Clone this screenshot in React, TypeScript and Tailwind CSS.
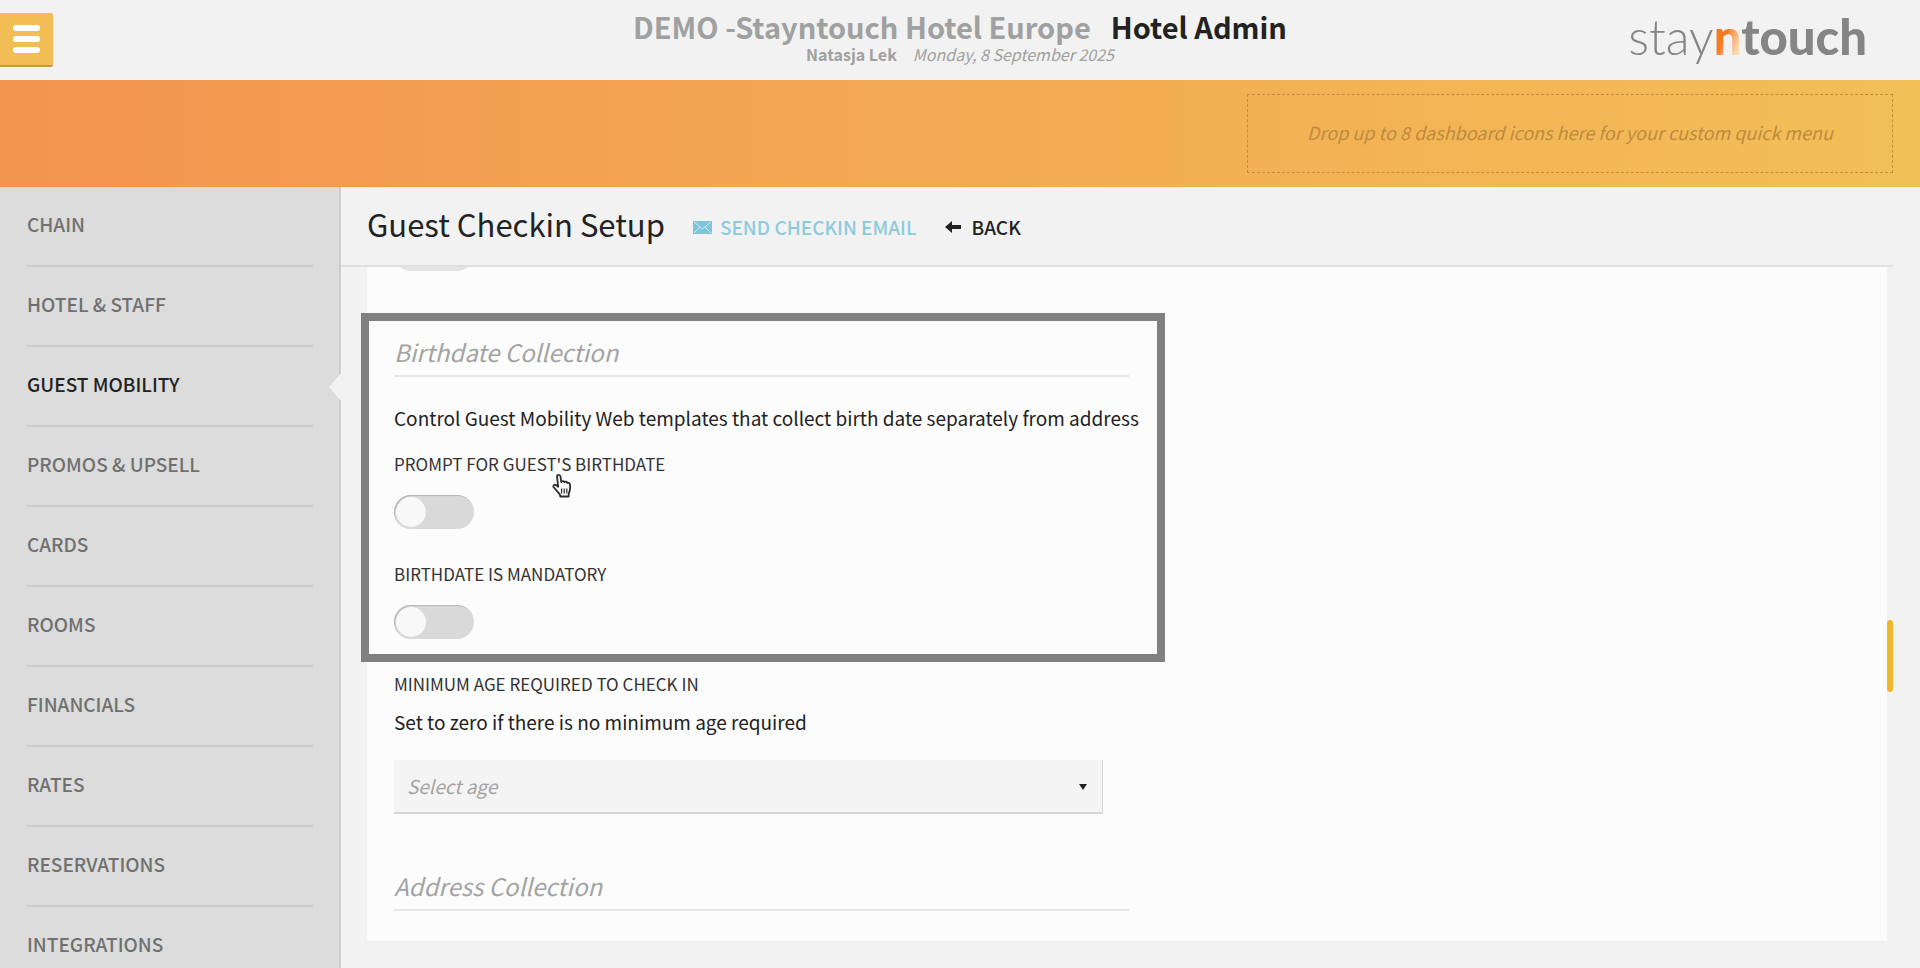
import { useState } from 'react';

const menuItems = [
  'Chain',
  'Hotel & Staff',
  'Guest Mobility',
  'Promos & Upsell',
  'Cards',
  'Rooms',
  'Financials',
  'Rates',
  'Reservations',
  'Integrations',
];

interface ToggleProps {
  id: string;
  label: string;
  checked: boolean;
  onChange: (value: boolean) => void;
}

function Toggle({ id, label, checked, onChange }: ToggleProps) {
  return (
    <div className="flex flex-col items-start gap-[19px]">
      <label htmlFor={id} className="text-[17px] leading-6 uppercase text-[#333333]">
        {label}
      </label>
      <input
        id={id}
        type="checkbox"
        role="switch"
        checked={checked}
        onChange={(e) => onChange(e.target.checked)}
        className="h-[34px] w-20 cursor-pointer appearance-none rounded-full bg-[#d9d9d9] p-0.5 shadow-[inset_1px_1px_1px_#b5b5b5] before:block before:size-[30px] before:rounded-full before:bg-[#f8f8f8] checked:bg-[#f2bd55] checked:before:ml-auto"
      />
    </div>
  );
}

function SectionTitle({ children }: { children: string }) {
  return (
    <h2 className="border-b-2 border-[#e6e6e6] pb-[7px] text-2xl leading-[33px] italic text-[#a3a3a3]">
      {children}
    </h2>
  );
}

function HandCursor() {
  return (
    <svg viewBox="0 0 20 26" className="pointer-events-none absolute top-[138px] left-[158px] h-[26px] w-5" aria-hidden="true">
      <path
        d="M5 3.5C5 1.2 8.2 1.2 8.5 3.5L9.3 9C10 7.6 12 7.9 12.4 9.2C13.2 8.2 15 8.7 15.3 10C16.4 9.4 17.9 10.2 18 11.8C18.4 15.3 18.3 17.4 16.8 20.4L16.6 23.5H8.2L8 21.5C6 19.2 3.6 16.5 1.8 14.3C.6 12.5 2.6 10.9 4.2 12.2L6.2 13.8Z"
        fill="#ffffff"
        stroke="#2b2b2b"
        strokeWidth="1.8"
        strokeLinejoin="round"
      />
      <path d="M9.6 15.5V20.5M12.2 15.5V20.5M14.8 15.5V20.5" stroke="#2b2b2b" strokeWidth="1.2" />
    </svg>
  );
}

export default function App() {
  const [active, setActive] = useState('Guest Mobility');
  const [promptBirthdate, setPromptBirthdate] = useState(false);
  const [mandatory, setMandatory] = useState(false);
  const [age, setAge] = useState('');

  return (
    <div className="flex h-screen flex-col overflow-hidden bg-[#f2f2f2] font-['Noto_Sans_CJK_SC',sans-serif] text-[#222222]">
      {/* Header */}
      <header className="grid h-20 shrink-0 grid-cols-[1fr_auto_1fr] items-start">
        <button
          aria-label="Open menu"
          className="mt-[13px] flex h-[54px] w-[53px] flex-col items-center justify-center gap-[5px] rounded-r-xs border-b-2 border-[#c39a48] bg-[#f2bd55]"
        >
          <span className="h-1.5 w-[27px] rounded-full bg-white" />
          <span className="h-1.5 w-[27px] rounded-full bg-white" />
          <span className="h-1.5 w-[27px] rounded-full bg-white" />
        </button>
        <div className="flex flex-col items-center pt-2.5">
          <h1 className="flex gap-5 text-[29px] leading-8 font-bold">
            <span className="text-[#a0a0a0]">DEMO -Stayntouch Hotel Europe</span>
            <span>Hotel Admin</span>
          </h1>
          <p className="flex gap-4 pt-0.5 text-base leading-5 text-[#a0a0a0]">
            <strong>Natasja Lek</strong>
            <em>Monday, 8 September 2025</em>
          </p>
        </div>
        <div className="justify-self-end pt-1.5 pr-[53px] font-['Lato',sans-serif] text-[49px] leading-[60px] text-[#858585]">
          <span className="font-light">stay</span>
          <span className="bg-linear-to-br from-[#f47b20] from-45% to-[#fbd9b0] to-80% bg-clip-text font-black text-transparent">n</span>
          <span className="font-black">touch</span>
        </div>
      </header>

      {/* Quick menu */}
      <div className="flex h-[107px] shrink-0 justify-end bg-linear-to-r from-[#f3944f] to-[#f2bf57] px-[27px] py-[14px]">
        <div className="flex w-[646px] items-center justify-center border border-dashed border-[#c48c3c] pb-1 text-lg italic text-[#bf8a3f]">
          Drop up to 8 dashboard icons here for your custom quick menu
        </div>
      </div>

      <div className="flex min-h-0 flex-1">
        {/* Sidebar */}
        <nav className="w-[341px] shrink-0 overflow-hidden bg-[#dcdcdc] pl-[27px] shadow-[inset_-2px_0_0_#cdcdcd]">
          {menuItems.map((item) => (
            <div key={item} className="relative pr-7">
              <a
                href="#"
                onClick={() => setActive(item)}
                className={`flex h-20 items-center border-b-2 border-[#cbcbcb] pb-1 text-[19px] font-medium uppercase ${
                  item === active ? 'text-[#222222]' : 'text-[#707070]'
                }`}
              >
                {item}
              </a>
              {item === active && (
                <span className="absolute top-[26px] right-0 h-7 w-3 bg-[#f2f2f2] [clip-path:polygon(100%_0,0_50%,100%_100%)]" />
              )}
            </div>
          ))}
        </nav>

        {/* Main content */}
        <main className="flex min-w-0 flex-1 flex-col pr-[27px] pb-[27px]">
          <div className="flex h-20 shrink-0 items-center gap-7 border-b-2 border-[#e0e0e0] pl-[26px]">
            <h1 className="pb-1 text-[31px]">Guest Checkin Setup</h1>
            <button className="flex items-center gap-2 pt-0.5 text-[19px] font-medium text-[#8ccbdd]">
              <svg viewBox="0 0 19 13" className="h-[13px] w-[19px]" aria-hidden="true">
                <rect width="19" height="13" fill="#7fc6da" />
                <path d="M1 1L9.5 8L18 1M1 12L7 6M18 12L12 6" fill="none" stroke="#c9e8f0" strokeWidth="1" />
              </svg>
              SEND CHECKIN EMAIL
            </button>
            <button className="flex items-center gap-[11px] pt-0.5 text-[19px] font-medium">
              <svg viewBox="0 0 16 12" className="h-3 w-4" aria-hidden="true">
                <path d="M0 6L7 0V4H16V8H7V12Z" fill="#222222" />
              </svg>
              BACK
            </button>
          </div>

          <div className="relative ml-[26px] min-h-0 flex-1">
            <div className="mr-1.5 h-full overflow-hidden bg-[#fcfcfc] px-[27px]">
              <div className="h-1 overflow-hidden">
                <div className="-mt-[30px] h-[34px] w-20 rounded-full bg-[#e4e4e4]" />
              </div>

              <form className="w-[735px] pt-[64px]">
                <section className="relative">
                  <SectionTitle>Birthdate Collection</SectionTitle>
                  <p className="pt-[27px] pb-5 text-[19px] leading-7 whitespace-nowrap">
                    Control Guest Mobility Web templates that collect birth date separately from address
                  </p>
                  <div className="flex flex-col gap-[33px]">
                    <Toggle
                      id="prompt-birthdate"
                      label="Prompt for guest's birthdate"
                      checked={promptBirthdate}
                      onChange={setPromptBirthdate}
                    />
                    <Toggle
                      id="birthdate-mandatory"
                      label="Birthdate is mandatory"
                      checked={mandatory}
                      onChange={setMandatory}
                    />
                  </div>
                  <HandCursor />
                </section>

                <section className="pt-[33px]">
                  <label htmlFor="minimum-age" className="block text-[17px] leading-6 uppercase text-[#333333]">
                    Minimum age required to check in
                  </label>
                  <p className="pt-3 text-[19px] leading-7">Set to zero if there is no minimum age required</p>
                  <div className="relative mt-6 w-[709px]">
                    <select
                      id="minimum-age"
                      value={age}
                      onChange={(e) => setAge(e.target.value)}
                      className="h-[54px] w-full appearance-none border-r border-b-2 border-[#d6d6d6] bg-[#f4f4f4] px-[13px] text-[19px] italic text-[#a3a3a3]"
                    >
                      <option value="">Select age</option>
                      <option value="0">0</option>
                      <option value="16">16</option>
                      <option value="18">18</option>
                      <option value="21">21</option>
                    </select>
                    <svg viewBox="0 0 8 6" className="pointer-events-none absolute top-6 right-4 h-1.5 w-2" aria-hidden="true">
                      <path d="M0 0H8L4 6Z" fill="#222222" />
                    </svg>
                  </div>
                </section>

                <section className="pt-[55px]">
                  <SectionTitle>Address Collection</SectionTitle>
                </section>
              </form>
            </div>

            {/* Highlight frame round the birthdate settings */}
            <div className="pointer-events-none absolute top-[46px] -left-[6px] h-[349px] w-[804px] border-8 border-[#808080]" />
            {/* Scroll thumb */}
            <div className="absolute top-[353px] right-0 h-[72px] w-1.5 rounded-full bg-[#f0b62c]" />
          </div>
        </main>
      </div>
    </div>
  );
}
